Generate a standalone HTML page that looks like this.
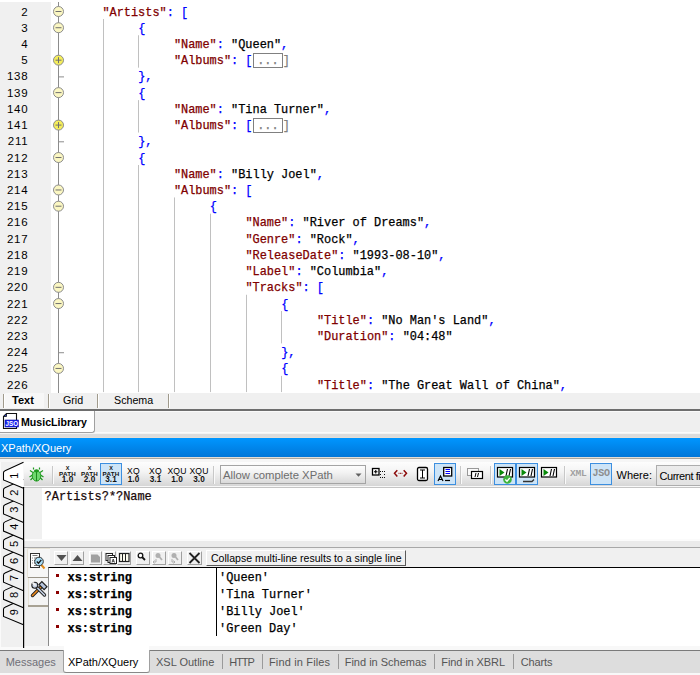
<!DOCTYPE html>
<html><head><meta charset="utf-8"><style>
*{box-sizing:border-box}
html,body{margin:0;padding:0}
body{width:700px;height:675px;overflow:hidden;position:relative;background:#f0f0f0;font-family:"Liberation Sans",sans-serif}
.a{position:absolute}
.ln{position:absolute;left:0;width:28.5px;text-align:right;font-size:11.5px;letter-spacing:0.8px;color:#000;line-height:16px}
.cl{position:absolute;font-family:"Liberation Mono",monospace;font-size:11.92px;line-height:16px;white-space:pre;color:#00f;-webkit-text-stroke:0.25px currentColor}
.k{color:#800000}.s{color:#000}.p{color:#00f}.g{color:#808080}
.box{display:inline-block;position:relative;color:#808080;border:1px solid #808080;height:15px;line-height:14px;vertical-align:top;margin-top:0px;margin-left:0.5px;padding:0 3px 0 3.2px}
.gd{position:absolute;width:1px;background:#c8c8c8}
.tb{font-family:"Liberation Sans",sans-serif}
</style></head><body>
<div class="a" style="left:0;top:0;width:700px;height:393px;background:#fff;overflow:hidden"><div class="a" style="left:0;top:2px;width:51px;height:391px;background:#f0f0f0"></div><div class="ln" style="top:4px">2</div><div class="cl" style="left:102.40px;top:5px"><span class="k">&quot;Artists&quot;</span><span class="p">: </span><span class="p">[</span></div><div class="ln" style="top:20px">3</div><div class="cl" style="left:138.15px;top:21px"><span class="p">{</span></div><div class="ln" style="top:36px">4</div><div class="cl" style="left:173.90px;top:37px"><span class="k">&quot;Name&quot;</span><span class="p">: </span><span class="s">&quot;Queen&quot;</span><span class="p">,</span></div><div class="ln" style="top:52px">5</div><div class="cl" style="left:173.90px;top:53px"><span class="k">&quot;Albums&quot;</span><span class="p">: </span><span class="p">[</span><span class="box">...</span><span class="g">]</span></div><div class="ln" style="top:68px">138</div><div class="cl" style="left:138.15px;top:69px"><span class="p">},</span></div><div class="ln" style="top:85px">139</div><div class="cl" style="left:138.15px;top:86px"><span class="p">{</span></div><div class="ln" style="top:101px">140</div><div class="cl" style="left:173.90px;top:102px"><span class="k">&quot;Name&quot;</span><span class="p">: </span><span class="s">&quot;Tina Turner&quot;</span><span class="p">,</span></div><div class="ln" style="top:117px">141</div><div class="cl" style="left:173.90px;top:118px"><span class="k">&quot;Albums&quot;</span><span class="p">: </span><span class="p">[</span><span class="box">...</span><span class="g">]</span></div><div class="ln" style="top:133px">211</div><div class="cl" style="left:138.15px;top:134px"><span class="p">},</span></div><div class="ln" style="top:150px">212</div><div class="cl" style="left:138.15px;top:151px"><span class="p">{</span></div><div class="ln" style="top:166px">213</div><div class="cl" style="left:173.90px;top:167px"><span class="k">&quot;Name&quot;</span><span class="p">: </span><span class="s">&quot;Billy Joel&quot;</span><span class="p">,</span></div><div class="ln" style="top:182px">214</div><div class="cl" style="left:173.90px;top:183px"><span class="k">&quot;Albums&quot;</span><span class="p">: </span><span class="p">[</span></div><div class="ln" style="top:198px">215</div><div class="cl" style="left:209.65px;top:199px"><span class="p">{</span></div><div class="ln" style="top:214px">216</div><div class="cl" style="left:245.40px;top:215px"><span class="k">&quot;Name&quot;</span><span class="p">: </span><span class="s">&quot;River of Dreams&quot;</span><span class="p">,</span></div><div class="ln" style="top:231px">217</div><div class="cl" style="left:245.40px;top:232px"><span class="k">&quot;Genre&quot;</span><span class="p">: </span><span class="s">&quot;Rock&quot;</span><span class="p">,</span></div><div class="ln" style="top:247px">218</div><div class="cl" style="left:245.40px;top:248px"><span class="k">&quot;ReleaseDate&quot;</span><span class="p">: </span><span class="s">&quot;1993-08-10&quot;</span><span class="p">,</span></div><div class="ln" style="top:263px">219</div><div class="cl" style="left:245.40px;top:264px"><span class="k">&quot;Label&quot;</span><span class="p">: </span><span class="s">&quot;Columbia&quot;</span><span class="p">,</span></div><div class="ln" style="top:279px">220</div><div class="cl" style="left:245.40px;top:280px"><span class="k">&quot;Tracks&quot;</span><span class="p">: </span><span class="p">[</span></div><div class="ln" style="top:296px">221</div><div class="cl" style="left:281.15px;top:297px"><span class="p">{</span></div><div class="ln" style="top:312px">222</div><div class="cl" style="left:316.90px;top:313px"><span class="k">&quot;Title&quot;</span><span class="p">: </span><span class="s">&quot;No Man&#x27;s Land&quot;</span><span class="p">,</span></div><div class="ln" style="top:328px">223</div><div class="cl" style="left:316.90px;top:329px"><span class="k">&quot;Duration&quot;</span><span class="p">: </span><span class="s">&quot;04:48&quot;</span></div><div class="ln" style="top:344px">224</div><div class="cl" style="left:281.15px;top:345px"><span class="p">},</span></div><div class="ln" style="top:360px">225</div><div class="cl" style="left:281.15px;top:361px"><span class="p">{</span></div><div class="ln" style="top:377px">226</div><div class="cl" style="left:316.90px;top:378px"><span class="k">&quot;Title&quot;</span><span class="p">: </span><span class="s">&quot;The Great Wall of China&quot;</span><span class="p">,</span></div><svg class="a" style="left:0;top:0" width="700" height="393"><line x1="58.5" y1="2" x2="58.5" y2="393" stroke="#8c8c8c" stroke-width="1"/><circle cx="58.5" cy="11.50" r="5" fill="#fbf7c2" stroke="#8c8c8c" stroke-width="1"/><line x1="55.5" y1="11.50" x2="61.5" y2="11.50" stroke="#707070" stroke-width="1"/><circle cx="58.5" cy="27.73" r="5" fill="#fbf7c2" stroke="#8c8c8c" stroke-width="1"/><line x1="55.5" y1="27.73" x2="61.5" y2="27.73" stroke="#707070" stroke-width="1"/><circle cx="58.5" cy="60.18" r="5" fill="#f5ee5a" stroke="#8c8c8c" stroke-width="1"/><line x1="55.5" y1="60.18" x2="61.5" y2="60.18" stroke="#707070" stroke-width="1"/><line x1="58.5" y1="57.18" x2="58.5" y2="63.18" stroke="#707070" stroke-width="1"/><line x1="58.5" y1="76.90" x2="64" y2="76.90" stroke="#8c8c8c" stroke-width="1"/><circle cx="58.5" cy="92.62" r="5" fill="#fbf7c2" stroke="#8c8c8c" stroke-width="1"/><line x1="55.5" y1="92.62" x2="61.5" y2="92.62" stroke="#707070" stroke-width="1"/><circle cx="58.5" cy="125.08" r="5" fill="#f5ee5a" stroke="#8c8c8c" stroke-width="1"/><line x1="55.5" y1="125.08" x2="61.5" y2="125.08" stroke="#707070" stroke-width="1"/><line x1="58.5" y1="122.08" x2="58.5" y2="128.08" stroke="#707070" stroke-width="1"/><line x1="58.5" y1="141.80" x2="64" y2="141.80" stroke="#8c8c8c" stroke-width="1"/><circle cx="58.5" cy="157.53" r="5" fill="#fbf7c2" stroke="#8c8c8c" stroke-width="1"/><line x1="55.5" y1="157.53" x2="61.5" y2="157.53" stroke="#707070" stroke-width="1"/><circle cx="58.5" cy="189.98" r="5" fill="#fbf7c2" stroke="#8c8c8c" stroke-width="1"/><line x1="55.5" y1="189.98" x2="61.5" y2="189.98" stroke="#707070" stroke-width="1"/><circle cx="58.5" cy="206.20" r="5" fill="#fbf7c2" stroke="#8c8c8c" stroke-width="1"/><line x1="55.5" y1="206.20" x2="61.5" y2="206.20" stroke="#707070" stroke-width="1"/><circle cx="58.5" cy="287.33" r="5" fill="#fbf7c2" stroke="#8c8c8c" stroke-width="1"/><line x1="55.5" y1="287.33" x2="61.5" y2="287.33" stroke="#707070" stroke-width="1"/><circle cx="58.5" cy="303.55" r="5" fill="#fbf7c2" stroke="#8c8c8c" stroke-width="1"/><line x1="55.5" y1="303.55" x2="61.5" y2="303.55" stroke="#707070" stroke-width="1"/><line x1="58.5" y1="352.73" x2="64" y2="352.73" stroke="#8c8c8c" stroke-width="1"/><circle cx="58.5" cy="368.45" r="5" fill="#fbf7c2" stroke="#8c8c8c" stroke-width="1"/><line x1="55.5" y1="368.45" x2="61.5" y2="368.45" stroke="#707070" stroke-width="1"/><line x1="103.5" y1="19.02" x2="103.5" y2="392.08" stroke="#c0c0c0" stroke-width="1"/><line x1="138.5" y1="35.24" x2="138.5" y2="67.68" stroke="#c0c0c0" stroke-width="1"/><line x1="138.5" y1="100.12" x2="138.5" y2="132.56" stroke="#c0c0c0" stroke-width="1"/><line x1="138.5" y1="165.00" x2="138.5" y2="392.08" stroke="#c0c0c0" stroke-width="1"/><line x1="174.5" y1="197.44" x2="174.5" y2="392.08" stroke="#c0c0c0" stroke-width="1"/><line x1="210.5" y1="213.66" x2="210.5" y2="392.08" stroke="#c0c0c0" stroke-width="1"/><line x1="246.5" y1="294.76" x2="246.5" y2="392.08" stroke="#c0c0c0" stroke-width="1"/><line x1="281.5" y1="310.98" x2="281.5" y2="343.42" stroke="#c0c0c0" stroke-width="1"/><line x1="281.5" y1="375.86" x2="281.5" y2="392.08" stroke="#c0c0c0" stroke-width="1"/></svg></div><div class="a" style="left:0;top:393px;width:700px;height:16px;background:#f0f0f0"></div><div class="a" style="left:5px;top:393px;width:39px;height:15px;background:#f7f7f7"></div><div class="a" style="left:3px;top:394px;width:2px;height:14px;background:linear-gradient(90deg,#a09a8c 50%,#fff 50%)"></div><div class="a" style="left:48px;top:394px;width:2px;height:14px;background:linear-gradient(90deg,#a09a8c 50%,#fff 50%)"></div><div class="a" style="left:97px;top:394px;width:2px;height:14px;background:linear-gradient(90deg,#a09a8c 50%,#fff 50%)"></div><div class="a" style="left:168px;top:394px;width:2px;height:14px;background:linear-gradient(90deg,#a09a8c 50%,#fff 50%)"></div><div class="a" style="left:12px;top:392px;font-size:11px;font-weight:bold;line-height:16px">Text</div><div class="a" style="left:63px;top:392px;font-size:10.7px;line-height:16px">Grid</div><div class="a" style="left:114px;top:392px;font-size:10.7px;line-height:16px">Schema</div><div class="a" style="left:0;top:409px;width:700px;height:2px;background:#6e6e6e"></div><div class="a" style="left:0;top:411px;width:700px;height:21px;background:#efefef;border-top:1px solid #fafafa"></div><div class="a" style="left:0;top:432px;width:700px;height:1px;background:#fbfbfb"></div><div class="a" style="left:-2px;top:411px;width:97px;height:22px;background:#fff;border:1px solid #a0a0a0;border-top:none;border-radius:0 0 3px 3px"></div><div class="a" style="left:0;top:433px;width:700px;height:5px;background:#dcdcdc;border-top:1px solid #f4f4f4;border-bottom:1px solid #e6dfd6"></div><svg class="a" style="left:2px;top:412px" width="18" height="18">
<path d="M1.5 4.5 L4.5 1.5 H14.5 V16.5 H1.5 Z" fill="#fff" stroke="#111" stroke-width="1.1"/>
<path d="M1.8 4.5 H4.5 V1.8Z" fill="#3050ff" stroke="#111" stroke-width="0.8"/>
<rect x="3" y="8" width="13.5" height="7" fill="#1a22f0" stroke="#0a10a0" stroke-width="0.6"/>
<text x="3.6" y="14.4" font-family="Liberation Sans" font-size="7.8" font-weight="bold" fill="#fff" textLength="12.4" lengthAdjust="spacingAndGlyphs">JSO</text>
</svg><div class="a" style="left:21px;top:414px;font-size:10.6px;font-weight:bold;line-height:16px">MusicLibrary</div><div class="a" style="left:0;top:438px;width:700px;height:19px;background:linear-gradient(#0096ff,#0076d8)"></div><div class="a" style="left:1px;top:440px;font-size:11px;color:#fff;line-height:17px">XPath/XQuery</div><div class="a" style="left:0;top:457px;width:700px;height:1px;background:#e2ddd6"></div><div class="a" style="left:0;top:458px;width:700px;height:1px;background:#aca89f"></div><div class="a" style="left:0;top:459px;width:700px;height:3px;background:#f6f6f6"></div><div class="a" style="left:0;top:462px;width:24px;height:188px;background:#fafafa"></div><div class="a" style="left:1px;top:462px;width:23px;height:185px;background:#f0f0f0"></div><div class="a" style="left:24px;top:462px;width:676px;height:24px;background:linear-gradient(#fdfdfd 0%,#f4f4f4 40%,#d6d6d6 100%)"></div><div class="a" style="left:24px;top:486px;width:676px;height:1px;background:#f8f8f8"></div><div class="a" style="left:24px;top:487px;width:676px;height:1px;background:#c4c4c4"></div><div class="a" style="left:52px;top:466px;width:1px;height:18px;background:#c8c8c8"></div><div class="a" style="left:53px;top:466px;width:1px;height:18px;background:#fafafa"></div><div class="a" style="left:213px;top:466px;width:1px;height:18px;background:#c8c8c8"></div><div class="a" style="left:214px;top:466px;width:1px;height:18px;background:#fafafa"></div><div class="a" style="left:460px;top:466px;width:1px;height:18px;background:#c8c8c8"></div><div class="a" style="left:461px;top:466px;width:1px;height:18px;background:#fafafa"></div><div class="a" style="left:490px;top:466px;width:1px;height:18px;background:#c8c8c8"></div><div class="a" style="left:491px;top:466px;width:1px;height:18px;background:#fafafa"></div><div class="a" style="left:564px;top:466px;width:1px;height:18px;background:#c8c8c8"></div><div class="a" style="left:565px;top:466px;width:1px;height:18px;background:#fafafa"></div><svg class="a" style="left:28px;top:467px" width="17" height="15" viewBox="0 0 17 15">
<g stroke="#1e9a1e" stroke-width="1.2" fill="none">
<path d="M5.5 0.5 V2.5 M11.5 0.5 V2.5 M2 3.5 L5 5.5 M15 3.5 L12 5.5 M1.5 10 L4.5 8 M15.5 10 L12.5 8 M2.5 13 L5 10.5 M14.5 13 L12 10.5"/>
</g>
<ellipse cx="8.5" cy="8.8" rx="4.3" ry="5.3" fill="#6ed86e" stroke="#1e9a1e" stroke-width="1"/>
<line x1="8.5" y1="4" x2="8.5" y2="14" stroke="#1e8a1e" stroke-width="1"/>
<ellipse cx="8.5" cy="3.8" rx="2.5" ry="1.6" fill="#1e9a1e"/>
</svg><div class="a" style="left:100px;top:463px;width:22px;height:22px;background:#cde4f7;border:1px solid #3c8fe0"></div><div class="a" style="left:434px;top:463px;width:22px;height:22px;background:#cde4f7;border:1px solid #3c8fe0"></div><div class="a" style="left:494px;top:463px;width:22px;height:22px;background:#cde4f7;border:1px solid #3c8fe0"></div><div class="a" style="left:516px;top:463px;width:22px;height:22px;background:#cde4f7;border:1px solid #3c8fe0"></div><div class="a" style="left:590px;top:463px;width:22px;height:22px;background:#cde4f7;border:1px solid #3c8fe0"></div><div class="a" style="left:47.5px;top:466.34px;width:40px;text-align:center;font-weight:bold;color:#111;line-height:1;font-size:5.5px;">X</div><div class="a" style="left:47.5px;top:470.55px;width:40px;text-align:center;font-weight:bold;color:#111;line-height:1;font-size:6.2px;letter-spacing:0.3px">PATH</div><div class="a" style="left:47.5px;top:476.26px;width:40px;text-align:center;font-weight:bold;color:#111;line-height:1;font-size:8.2px;">1.0</div><div class="a" style="left:69.5px;top:466.34px;width:40px;text-align:center;font-weight:bold;color:#111;line-height:1;font-size:5.5px;">X</div><div class="a" style="left:69.5px;top:470.55px;width:40px;text-align:center;font-weight:bold;color:#111;line-height:1;font-size:6.2px;letter-spacing:0.3px">PATH</div><div class="a" style="left:69.5px;top:476.26px;width:40px;text-align:center;font-weight:bold;color:#111;line-height:1;font-size:8.2px;">2.0</div><div class="a" style="left:91px;top:466.34px;width:40px;text-align:center;font-weight:bold;color:#111;line-height:1;font-size:5.5px;">X</div><div class="a" style="left:91px;top:470.55px;width:40px;text-align:center;font-weight:bold;color:#111;line-height:1;font-size:6.2px;letter-spacing:0.3px">PATH</div><div class="a" style="left:91px;top:476.26px;width:40px;text-align:center;font-weight:bold;color:#111;line-height:1;font-size:8.2px;">3.1</div><div class="a" style="left:113.5px;top:466.92px;width:40px;text-align:center;font-weight:bold;color:#111;line-height:1;font-size:8.6px;font-weight:normal;color:#000;letter-spacing:0.2px">XQ</div><div class="a" style="left:113.5px;top:476.26px;width:40px;text-align:center;font-weight:bold;color:#111;line-height:1;font-size:8.2px;">1.0</div><div class="a" style="left:135.5px;top:466.92px;width:40px;text-align:center;font-weight:bold;color:#111;line-height:1;font-size:8.6px;font-weight:normal;color:#000;letter-spacing:0.2px">XQ</div><div class="a" style="left:135.5px;top:476.26px;width:40px;text-align:center;font-weight:bold;color:#111;line-height:1;font-size:8.2px;">3.1</div><div class="a" style="left:157px;top:466.92px;width:40px;text-align:center;font-weight:bold;color:#111;line-height:1;font-size:8.6px;font-weight:normal;color:#000;letter-spacing:0.2px">XQU</div><div class="a" style="left:157px;top:476.26px;width:40px;text-align:center;font-weight:bold;color:#111;line-height:1;font-size:8.2px;">1.0</div><div class="a" style="left:179px;top:466.92px;width:40px;text-align:center;font-weight:bold;color:#111;line-height:1;font-size:8.6px;font-weight:normal;color:#000;letter-spacing:0.2px">XQU</div><div class="a" style="left:179px;top:476.26px;width:40px;text-align:center;font-weight:bold;color:#111;line-height:1;font-size:8.2px;">3.0</div><div class="a" style="left:220px;top:465px;width:146px;height:19px;background:linear-gradient(#fdfdfd,#f2f2f2 40%,#d9d9d9);border:1px solid #a4a4a4"></div><div class="a" style="left:223px;top:467px;font-size:11.3px;color:#6d6d6d;line-height:17px">Allow complete XPath</div><svg class="a" style="left:354px;top:472.5px" width="9" height="5"><path d="M1.5 0.5 H7.5 L4.5 3.8Z" fill="#606060"/></svg><svg class="a" style="left:371px;top:467px" width="16" height="13">
<rect x="1.5" y="1.5" width="6.5" height="6.5" fill="#fff" stroke="#000" stroke-width="1.3"/>
<path d="M4.75 3 V6.5 M3 4.75 H6.5" stroke="#000" stroke-width="1.1"/>
<g fill="#111"><rect x="9" y="4" width="1" height="1"/><rect x="11" y="4" width="1" height="1"/><rect x="13" y="4" width="1" height="1"/>
<rect x="9" y="7" width="1" height="1"/><rect x="13" y="7" width="1" height="1"/>
<rect x="9" y="10" width="1" height="1"/><rect x="11" y="10" width="1" height="1"/><rect x="13" y="10" width="1" height="1"/></g>
</svg><svg class="a" style="left:393px;top:469px" width="15" height="9">
<path d="M4.3 1.2 L1.5 4.3 L4.3 7.4 M10.7 1.2 L13.5 4.3 L10.7 7.4" stroke="#8b0a0a" stroke-width="1.5" fill="none"/>
<g fill="#8b0a0a"><rect x="5.5" y="3.8" width="1" height="1"/><rect x="7" y="3.8" width="1" height="1"/><rect x="8.5" y="3.8" width="1" height="1"/></g>
</svg><svg class="a" style="left:416px;top:466px" width="13" height="16">
<rect x="1.5" y="1.5" width="10" height="13" rx="1.5" fill="#fff" stroke="#000" stroke-width="1.3"/>
<path d="M4 4 H9 M6.5 4 V12 M4 12 H9" stroke="#000" stroke-width="1"/>
</svg><svg class="a" style="left:436px;top:465px" width="18" height="18">
<rect x="7.7" y="2.5" width="8" height="8.5" fill="#fff" stroke="#000" stroke-width="1.3"/>
<path d="M9.5 4.5 H14 M9.5 6.5 H14 M9.5 8.5 H14" stroke="#0000ff" stroke-width="1"/>
<path d="M2 16 L4.5 11 L7 16 M3 14.5 H6" stroke="#000" stroke-width="1.2" fill="none"/>
<path d="M9 15.5 H14" stroke="#000" stroke-width="1.2"/>
</svg><svg class="a" style="left:467px;top:468px" width="17" height="12">
<rect x="0.5" y="0.5" width="11" height="7" fill="#fafafa" stroke="#999" stroke-width="1"/>
<rect x="4.5" y="3.5" width="11" height="7" fill="#fff" stroke="#000" stroke-width="1.2"/>
<path d="M8 9 L9 5 M10.5 9 L11.5 5" stroke="#000" stroke-width="1"/>
</svg><svg class="a" style="left:496px;top:466px" width="18" height="18">
<rect x="1.5" y="1.5" width="15" height="9.5" fill="#fff" stroke="#000" stroke-width="1.2"/>
<path d="M3.5 3 V10 L8.5 6.5Z" fill="#0a8a0a"/>
<path d="M10 10 L11.5 3 M13 10 L14.5 3" stroke="#000" stroke-width="1.1"/>
<circle cx="11.5" cy="13.5" r="4.3" fill="#3cb43c"/><path d="M9.3 13.5 L11 15.2 L13.8 12" stroke="#fff" stroke-width="1.3" fill="none"/>
</svg><svg class="a" style="left:518px;top:466px" width="18" height="18">
<rect x="1.5" y="1.5" width="15" height="9.5" fill="#fff" stroke="#000" stroke-width="1.2"/>
<path d="M3.5 3 V10 L8.5 6.5Z" fill="#0a8a0a"/>
<path d="M10 10 L11.5 3 M13 10 L14.5 3" stroke="#000" stroke-width="1.1"/>
<path d="M5 15.5 H14 L16 13.5" stroke="#333" stroke-width="1.3" fill="none"/>
</svg><svg class="a" style="left:540px;top:466px" width="18" height="18">
<rect x="1.5" y="1.5" width="15" height="9.5" fill="#fff" stroke="#000" stroke-width="1.2"/>
<path d="M3.5 3 V10 L8.5 6.5Z" fill="#0a8a0a"/>
<path d="M10 10 L11.5 3 M13 10 L14.5 3" stroke="#000" stroke-width="1.1"/>

</svg><div class="a" style="left:570px;top:468.5px;font-size:9.6px;line-height:10px;font-weight:bold;color:#a0a0a0;font-family:'Liberation Mono',monospace;letter-spacing:-0.3px">XML</div><div class="a" style="left:592.5px;top:468.5px;font-size:10px;line-height:10px;font-weight:bold;color:#8e8e8e;font-family:'Liberation Mono',monospace;letter-spacing:-0.3px">JSO</div><div class="a" style="left:616.5px;top:467px;font-size:11px;color:#000;line-height:17px">Where:</div><div class="a" style="left:656px;top:465px;width:60px;height:21px;background:linear-gradient(#ececec,#e2e2e2);border:1px solid #adadad"></div><div class="a" style="left:659.5px;top:468px;font-size:11px;color:#000;line-height:17px;white-space:nowrap;letter-spacing:-0.45px">Current file</div><div class="a" style="left:24px;top:488px;width:676px;height:51px;background:#fff"></div><div class="a" style="left:25px;top:488px;width:17px;height:51px;background:#f0f0f0"></div><div class="cl" style="left:44.6px;top:489px;color:#1a0a0a">?Artists?*?Name</div><div class="a" style="left:24px;top:539px;width:676px;height:2px;background:#fbfbfb"></div><div class="a" style="left:24px;top:541px;width:676px;height:6px;background:#ebebeb"></div><div class="a" style="left:24px;top:547px;width:676px;height:1px;background:#a8a8a8"></div><div class="a" style="left:24px;top:548px;width:676px;height:99px;background:#f0f0f0"></div><div class="a" style="left:23px;top:487px;width:1.4px;height:161px;background:#000"></div><div class="a" style="left:27px;top:548px;width:23px;height:30px;background:#f6f6f6;border-left:1px solid #e6e2d6;border-top:1px solid #e6e2d6;border-radius:2px 0 0 0"></div><div class="a" style="left:28px;top:577px;width:21px;height:1px;background:#9a9488"></div><div class="a" style="left:28px;top:578px;width:21px;height:28px;background:#f4f4f4;border-left:1px solid #e6e2d6"></div><div class="a" style="left:28px;top:605px;width:21px;height:2px;background:#a8a294"></div><svg class="a" style="left:29px;top:552px" width="18" height="18">
<rect x="1.5" y="1.5" width="9" height="14" fill="#fff" stroke="#333" stroke-width="1"/>
<path d="M3.5 3.5 H8.5 M5 6 H8.5 M5 8.5 H8.5 M5 11 H8.5 M5 13.5 H8.5" stroke="#555" stroke-width="0.8"/>
<path d="M3.2 6 H4 M3.2 8.5 H4 M3.2 11 H4" stroke="#555" stroke-width="0.8"/>
<path d="M12 12.5 L15.5 16.5" stroke="#e08a1a" stroke-width="2"/>
<circle cx="10" cy="9.5" r="4.3" fill="#a8dcf4" stroke="#333" stroke-width="1"/>
<path d="M7.8 9.5 L9.5 11.2 L12.3 7.8" stroke="#111" stroke-width="1.3" fill="none"/>
</svg><svg class="a" style="left:26px;top:576px" width="24" height="32">
<path d="M6.5 19.5 L15.5 10.5" stroke="#222" stroke-width="3.4" stroke-linecap="round"/>
<path d="M6.5 19.5 L15.5 10.5" stroke="#f08a1a" stroke-width="1.6" stroke-linecap="round"/>
<path d="M10 10.5 L18.5 19" stroke="#222" stroke-width="3.4" stroke-linecap="round"/>
<path d="M10 10.5 L18.5 19" stroke="#c4d0e4" stroke-width="1.6" stroke-linecap="round"/>
<circle cx="8.8" cy="9.2" r="3" fill="#c4d0e4" stroke="#222" stroke-width="1.1"/>
<path d="M7 7 L9 9" stroke="#f2f2f2" stroke-width="1.8" stroke-linecap="round"/>
<rect x="-3.6" y="-2" width="7.2" height="4" transform="translate(17 9.6) rotate(45)" fill="#b8c6de" stroke="#222" stroke-width="1.2"/>
</svg><div class="a" style="left:54px;top:551px;width:14px;height:14px;border-top:1px solid #fff;border-left:1px solid #fff;border-right:1px solid #a0a0a0;border-bottom:1px solid #a0a0a0"></div><div class="a" style="left:70px;top:551px;width:14px;height:14px;border-top:1px solid #fff;border-left:1px solid #fff;border-right:1px solid #a0a0a0;border-bottom:1px solid #a0a0a0"></div><div class="a" style="left:89px;top:551px;width:13px;height:14px;border-top:1px solid #fff;border-left:1px solid #fff;border-right:1px solid #a0a0a0;border-bottom:1px solid #a0a0a0"></div><div class="a" style="left:103px;top:551px;width:13px;height:14px;border-top:1px solid #fff;border-left:1px solid #fff;border-right:1px solid #a0a0a0;border-bottom:1px solid #a0a0a0"></div><div class="a" style="left:117px;top:551px;width:14px;height:14px;border-top:1px solid #fff;border-left:1px solid #fff;border-right:1px solid #a0a0a0;border-bottom:1px solid #a0a0a0"></div><div class="a" style="left:136px;top:551px;width:14px;height:14px;border-top:1px solid #fff;border-left:1px solid #fff;border-right:1px solid #a0a0a0;border-bottom:1px solid #a0a0a0"></div><div class="a" style="left:152px;top:551px;width:14px;height:14px;border-top:1px solid #fff;border-left:1px solid #fff;border-right:1px solid #a0a0a0;border-bottom:1px solid #a0a0a0"></div><div class="a" style="left:168px;top:551px;width:14px;height:14px;border-top:1px solid #fff;border-left:1px solid #fff;border-right:1px solid #a0a0a0;border-bottom:1px solid #a0a0a0"></div><div class="a" style="left:187px;top:551px;width:15px;height:14px;border-top:1px solid #fff;border-left:1px solid #fff;border-right:1px solid #a0a0a0;border-bottom:1px solid #a0a0a0"></div><svg class="a" style="left:54px;top:551px" width="150" height="14">
<path d="M2.5 4 H12.5 L7.5 10Z" fill="#505050"/>
<path d="M18.5 10 H28.5 L23.5 4Z" fill="#505050"/>
<path d="M37 3.5 H43.5 L46 6 V11.5 H37Z" fill="#a0a0a0"/>
<rect x="52" y="2.5" width="6.5" height="7" fill="#fff" stroke="#222" stroke-width="1"/>
<rect x="54" y="4.5" width="6.5" height="7" fill="#fff" stroke="#222" stroke-width="1"/>
<rect x="56" y="6.5" width="6.5" height="6" fill="#fff" stroke="#222" stroke-width="1"/>
<path d="M58 11.5 L59.2 8 L60.5 11.5 M58.5 10.3 H60" stroke="#222" stroke-width="0.8" fill="none"/>
<rect x="65.5" y="2.5" width="9.5" height="8" fill="#fffef0" stroke="#222" stroke-width="1.2"/>
<path d="M68.5 3 V10 M71.5 3 V10" stroke="#222" stroke-width="1"/>
<circle cx="86.5" cy="4.5" r="2.3" fill="#fff" stroke="#111" stroke-width="1.3"/><path d="M88 6 L91 9" stroke="#111" stroke-width="1.8"/>
<circle cx="104" cy="4.5" r="2.5" fill="#b0b0b0"/><path d="M105.5 6 L108 9" stroke="#b0b0b0" stroke-width="1.8"/><path d="M102 8 V11 H99 M100.5 9.5 L99 11 L100.5 12.5" stroke="#b0b0b0" stroke-width="1" fill="none"/>
<circle cx="120" cy="4.5" r="2.5" fill="#b0b0b0"/><path d="M121.5 6 L124 9" stroke="#b0b0b0" stroke-width="1.8"/><path d="M118 8 V11 H121 M119.5 9.5 L121 11 L119.5 12.5" stroke="#b0b0b0" stroke-width="1" fill="none"/>
<path d="M135.5 2 L145.5 12 M145.5 2 L135.5 12" stroke="#222" stroke-width="1.8"/>
</svg><div class="a" style="left:206px;top:550px;width:200px;height:16px;background:#f0f0f0;border-top:1px solid #fff;border-left:1px solid #fff;border-right:1px solid #5a5a5a;border-bottom:1px solid #5a5a5a"></div><div class="a" style="left:211px;top:550px;font-size:10.55px;line-height:16px;color:#000;white-space:nowrap">Collapse multi-line results to a single line</div><div class="a" style="left:48px;top:567px;width:652px;height:79px;background:#fff;border-top:1px solid #000;border-left:1px solid #8a8a8a"></div><div class="a" style="left:216px;top:568px;width:1px;height:68px;background:#000"></div><div class="a" style="left:56px;top:574px;width:3px;height:3px;background:#8b0000"></div><div class="cl" style="left:67.5px;top:570px;color:#000;font-weight:bold">xs:string</div><div class="cl" style="left:219px;top:570px;color:#000">'Queen'</div><div class="a" style="left:56px;top:591px;width:3px;height:3px;background:#8b0000"></div><div class="cl" style="left:67.5px;top:587px;color:#000;font-weight:bold">xs:string</div><div class="cl" style="left:219px;top:587px;color:#000">'Tina Turner'</div><div class="a" style="left:56px;top:608px;width:3px;height:3px;background:#8b0000"></div><div class="cl" style="left:67.5px;top:604px;color:#000;font-weight:bold">xs:string</div><div class="cl" style="left:219px;top:604px;color:#000">'Billy Joel'</div><div class="a" style="left:56px;top:625px;width:3px;height:3px;background:#8b0000"></div><div class="cl" style="left:67.5px;top:621px;color:#000;font-weight:bold">xs:string</div><div class="cl" style="left:219px;top:621px;color:#000">'Green Day'</div><div class="a" style="left:24px;top:646px;width:676px;height:4px;background:#f8f8f8"></div><svg class="a" style="left:0;top:458px" width="25" height="195"><path d="M23.5 140.78 L5 149.18 Q3.5 149.78 3.5 151.28 V158.38 L23.5 166.78" fill="#f0f0f0" stroke="#000" stroke-width="1.05"/><path d="M23.5 123.72 L5 132.12 Q3.5 132.72 3.5 134.22 V141.32 L23.5 149.72" fill="#f0f0f0" stroke="#000" stroke-width="1.05"/><path d="M23.5 106.66 L5 115.06 Q3.5 115.66 3.5 117.16 V124.26 L23.5 132.66" fill="#f0f0f0" stroke="#000" stroke-width="1.05"/><path d="M23.5 89.60 L5 98.00 Q3.5 98.60 3.5 100.10 V107.20 L23.5 115.60" fill="#f0f0f0" stroke="#000" stroke-width="1.05"/><path d="M23.5 72.54 L5 80.94 Q3.5 81.54 3.5 83.04 V90.14 L23.5 98.54" fill="#f0f0f0" stroke="#000" stroke-width="1.05"/><path d="M23.5 55.48 L5 63.88 Q3.5 64.48 3.5 65.98 V73.08 L23.5 81.48" fill="#f0f0f0" stroke="#000" stroke-width="1.05"/><path d="M23.5 38.42 L5 46.82 Q3.5 47.42 3.5 48.92 V56.02 L23.5 64.42" fill="#f0f0f0" stroke="#000" stroke-width="1.05"/><path d="M23.5 21.36 L5 29.76 Q3.5 30.36 3.5 31.86 V38.96 L23.5 47.36" fill="#f0f0f0" stroke="#000" stroke-width="1.05"/><path d="M23.5 4.30 L5 12.70 Q3.5 13.30 3.5 14.80 V21.90 L23.5 30.30" fill="#fff" stroke="#000" stroke-width="1.05"/><text x="0" y="0" transform="translate(17.5 17.60) rotate(-90)" text-anchor="middle" font-family="Liberation Sans" font-size="11" fill="#000">1</text><text x="0" y="0" transform="translate(17.5 34.66) rotate(-90)" text-anchor="middle" font-family="Liberation Sans" font-size="11" fill="#000">2</text><text x="0" y="0" transform="translate(17.5 51.72) rotate(-90)" text-anchor="middle" font-family="Liberation Sans" font-size="11" fill="#000">3</text><text x="0" y="0" transform="translate(17.5 68.78) rotate(-90)" text-anchor="middle" font-family="Liberation Sans" font-size="11" fill="#000">4</text><text x="0" y="0" transform="translate(17.5 85.84) rotate(-90)" text-anchor="middle" font-family="Liberation Sans" font-size="11" fill="#000">5</text><text x="0" y="0" transform="translate(17.5 102.90) rotate(-90)" text-anchor="middle" font-family="Liberation Sans" font-size="11" fill="#000">6</text><text x="0" y="0" transform="translate(17.5 119.96) rotate(-90)" text-anchor="middle" font-family="Liberation Sans" font-size="11" fill="#000">7</text><text x="0" y="0" transform="translate(17.5 137.02) rotate(-90)" text-anchor="middle" font-family="Liberation Sans" font-size="11" fill="#000">8</text><text x="0" y="0" transform="translate(17.5 154.08) rotate(-90)" text-anchor="middle" font-family="Liberation Sans" font-size="11" fill="#000">9</text><line x1="23.6" y1="29" x2="23.6" y2="190" stroke="#000" stroke-width="1.2"/></svg><div class="a" style="left:0;top:650px;width:700px;height:25px;background:#dddddd;border-top:1px solid #7a7a7a"></div><div class="a" style="left:0;top:673px;width:700px;height:2px;background:#f8f8f8"></div><div class="a" style="left:63px;top:650px;width:87px;height:23px;background:#fff;border-left:1px solid #a0a0a0;border-right:1px solid #a0a0a0;border-bottom:1px solid #888;border-radius:0 0 3px 3px"></div><div class="a" style="left:64px;top:646px;width:85px;height:6px;background:#fff"></div><div class="a" style="left:5.7px;top:654px;font-size:11px;line-height:17px;color:#707078">Messages</div><div class="a" style="left:68px;top:654px;font-size:11px;line-height:17px;color:#000">XPath/XQuery</div><div class="a" style="left:156px;top:654px;font-size:11px;line-height:17px;color:#555;letter-spacing:0px">XSL Outline</div><div class="a" style="left:229.3px;top:654px;font-size:11px;line-height:17px;color:#555;letter-spacing:-1.1px">HTTP</div><div class="a" style="left:269px;top:654px;font-size:11px;line-height:17px;color:#555;letter-spacing:0.15px">Find in Files</div><div class="a" style="left:344.7px;top:654px;font-size:11px;line-height:17px;color:#555;letter-spacing:0px">Find in Schemas</div><div class="a" style="left:441.3px;top:654px;font-size:11px;line-height:17px;color:#555;letter-spacing:-0.1px">Find in XBRL</div><div class="a" style="left:520.8px;top:654px;font-size:11px;line-height:17px;color:#555;letter-spacing:-0.15px">Charts</div><div class="a" style="left:222px;top:654px;width:1px;height:15px;background:#9a9a9a"></div><div class="a" style="left:262px;top:654px;width:1px;height:15px;background:#9a9a9a"></div><div class="a" style="left:338px;top:654px;width:1px;height:15px;background:#9a9a9a"></div><div class="a" style="left:434px;top:654px;width:1px;height:15px;background:#9a9a9a"></div><div class="a" style="left:513px;top:654px;width:1px;height:15px;background:#9a9a9a"></div></body></html>
